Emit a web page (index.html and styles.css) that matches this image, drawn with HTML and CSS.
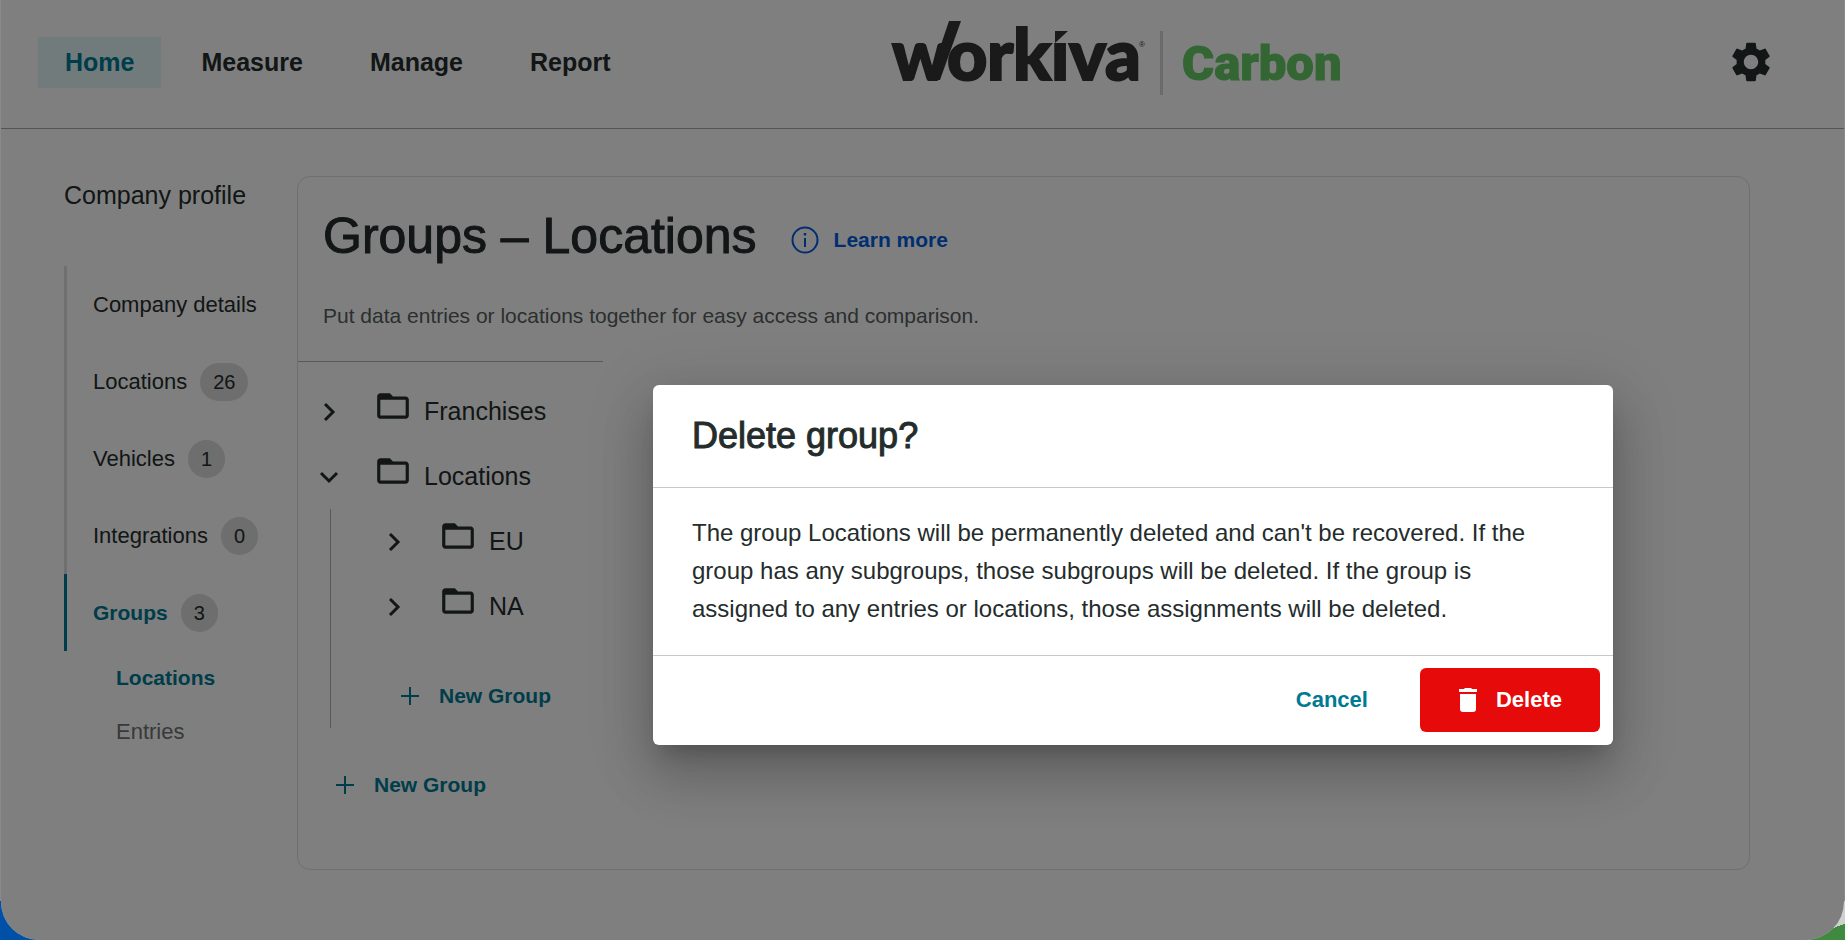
FILE: index.html
```html
<!DOCTYPE html>
<html lang="en">
<head>
<meta charset="utf-8">
<title>Groups – Locations</title>
<link rel="stylesheet" href="styles.css">
</head>
<body>
<svg class="sprite" aria-hidden="true">
  <symbol id="chevron-right" viewBox="0 0 24 24"><path d="M8 4l8 8-8 8" fill="none" stroke="currentColor" stroke-width="3"/></symbol>
  <symbol id="chevron-down" viewBox="0 0 24 24"><path d="M4 8l8 8 8-8" fill="none" stroke="currentColor" stroke-width="3"/></symbol>
  <symbol id="folder" viewBox="0 0 24 24"><path fill="currentColor" d="M20 6h-8l-2-2H4c-1.1 0-1.99.9-1.99 2L2 18c0 1.100.900 2 2 2h16c1.100 0 2-.9 2-2V8c0-1.100-.9-2-2-2zm0 12H4V8h16v10z"/></symbol>
  <symbol id="plus" viewBox="0 0 24 24"><path d="M12 3v18M3 12h18" fill="none" stroke="currentColor" stroke-width="2"/></symbol>
</svg>
<div class="window">
  <header class="topbar">
    <nav class="main-nav" aria-label="Main">
      <a class="main-link current" href="#">Home</a>
      <a class="main-link" href="#">Measure</a>
      <a class="main-link" href="#">Manage</a>
      <a class="main-link" href="#">Report</a>
    </nav>
    <svg class="logo" viewBox="0 4 450 84" role="img" aria-label="Workiva Carbon">
      <text class="logo-word" x="0 55 95 121 159 177 213" y="64">workiva</text>
      <path class="logo-mask" d="M161 8h18v19h-18z"/>
      <path class="logo-ink" d="M57 5h12L48 64H37z"/>
      <path class="logo-ink" d="M163 15h13l-13 12z"/>
      <text class="logo-mark" x="247" y="31">®</text>
      <path class="logo-rule" d="M268 15h3v64h-3z"/>
      <text class="logo-product" x="290" y="64">Carbon</text>
    </svg>
    <button class="icon-button" type="button" aria-label="Settings">
      <svg class="gear" viewBox="0 0 24 24"><path fill="currentColor" d="M19.140 12.940c.04-.3.06-.61.06-.94 0-.32-.02-.64-.07-.94l2.030-1.580c.18-.14.23-.41.12-.61l-1.920-3.320c-.12-.22-.37-.29-.59-.22l-2.390.96c-.5-.38-1.030-.7-1.620-.94l-.36-2.540c-.04-.24-.24-.41-.48-.41h-3.840c-.24 0-.43.17-.47.41l-.36 2.540c-.59.24-1.130.57-1.620.94l-2.390-.96c-.22-.08-.47 0-.59.22L2.740 8.870c-.12.21-.08.47.12.61l2.030 1.580c-.05.3-.09.63-.09.94s.02.64.07.94l-2.030 1.580c-.18.14-.23.41-.12.61l1.920 3.320c.12.22.37.29.59.22l2.390-.96c.5.38 1.030.7 1.620.94l.36 2.540c.05.24.24.41.48.41h3.840c.24 0 .44-.17.47-.41l.36-2.540c.59-.24 1.130-.56 1.620-.94l2.390.96c.22.08.47 0 .59-.22l1.920-3.320c.12-.22.07-.47-.12-.61l-2.010-1.580zM12 15.600c-1.980 0-3.600-1.620-3.600-3.600s1.620-3.600 3.600-3.600 3.600 1.620 3.600 3.600-1.620 3.600-3.600 3.600z"/></svg>
    </button>
  </header>

  <div class="layout">
    <aside class="sidebar">
      <h2 class="sidebar-title">Company profile</h2>
      <nav class="side-nav" aria-label="Company profile">
        <a class="side-link" href="#">Company details</a>
        <a class="side-link" href="#">Locations <span class="badge">26</span></a>
        <a class="side-link" href="#">Vehicles <span class="badge">1</span></a>
        <a class="side-link" href="#">Integrations <span class="badge">0</span></a>
        <a class="side-link current" href="#">Groups <span class="badge">3</span></a>
        <a class="sub-link current" href="#">Locations</a>
        <a class="sub-link" href="#">Entries</a>
      </nav>
    </aside>

    <main class="card">
      <div class="card-head">
        <div class="title-row">
          <h1 class="title">Groups – Locations</h1>
          <a class="learn-more" href="#">
            <svg class="info" viewBox="0 0 28 28"><circle cx="14" cy="14" r="12.500" fill="none" stroke="currentColor" stroke-width="2"/><path fill="currentColor" d="M13 12h2v9h-2zM12.800 7h2.400v2.600h-2.400z"/></svg>
            Learn more
          </a>
        </div>
        <p class="subtitle">Put data entries or locations together for easy access and comparison.</p>
      </div>
      <div class="tree">
        <ul class="tree-list">
          <li>
            <div class="tree-row"><button class="toggle" type="button" aria-label="Expand Franchises"><svg class="icon"><use href="#chevron-right"/></svg></button><svg class="folder"><use href="#folder"/></svg><span>Franchises</span></div>
          </li>
          <li>
            <div class="tree-row"><button class="toggle" type="button" aria-label="Collapse Locations"><svg class="icon"><use href="#chevron-down"/></svg></button><svg class="folder"><use href="#folder"/></svg><span>Locations</span></div>
            <ul class="tree-list children">
              <li class="tree-row"><button class="toggle" type="button" aria-label="Expand EU"><svg class="icon"><use href="#chevron-right"/></svg></button><svg class="folder"><use href="#folder"/></svg><span>EU</span></li>
              <li class="tree-row"><button class="toggle" type="button" aria-label="Expand NA"><svg class="icon"><use href="#chevron-right"/></svg></button><svg class="folder"><use href="#folder"/></svg><span>NA</span></li>
              <li class="new-item"><button class="new-group" type="button"><svg class="icon"><use href="#plus"/></svg>New Group</button></li>
            </ul>
          </li>
          <li class="new-item"><button class="new-group" type="button"><svg class="icon"><use href="#plus"/></svg>New Group</button></li>
        </ul>
      </div>
    </main>
  </div>

  <div class="backdrop">
    <section class="dialog" role="dialog" aria-modal="true" aria-labelledby="dialog-title">
      <h2 class="dialog-title" id="dialog-title">Delete group?</h2>
      <p class="dialog-body">The group Locations will be permanently deleted and can't be recovered. If the group has any subgroups, those subgroups will be deleted. If the group is assigned to any entries or locations, those assignments will be deleted.</p>
      <div class="dialog-actions">
        <button class="cancel" type="button">Cancel</button>
        <button class="delete" type="button">
          <svg class="trash" viewBox="0 0 24 28"><path fill="currentColor" d="M3 3h5l1-1h6l1 1h5v3H3zM4 8h16v15q0 3-3 3H7q-3 0-3-3z"/></svg>
          Delete
        </button>
      </div>
    </section>
  </div>
</div>
</body>
</html>
```
FILE: styles.css
```css
* { box-sizing: border-box; }

body {
  margin: 0;
  min-height: 100vh;
  display: flex;
  font-family: "Liberation Sans", Arial, sans-serif;
  font-size: 22px;
  color: #242c2c;
  background:
    linear-gradient(160deg, transparent 50%, #3f8a3f 50%) right bottom / 40px 20px no-repeat,
    linear-gradient(#0050a8, #0050a8) left bottom / 40px 40px no-repeat,
    linear-gradient(#d0d0d0, #d0d0d0) right bottom / 40px 40px no-repeat,
    #8a8a8a;
}

h1, h2, p, ul { margin: 0; padding: 0; font-weight: 400; }
ul { list-style: none; }
a { color: inherit; text-decoration: none; }
button { font: inherit; color: inherit; background: none; border: 0; padding: 0; cursor: pointer; }
svg { display: block; flex: none; }
.sprite { display: none; }

.window {
  position: relative;
  flex: 1;
  margin: 0 1px 1px;
  background: #fff;
  border-radius: 0 0 38px 38px;
  overflow: hidden;
}

.topbar {
  display: grid;
  grid-template-columns: 49% auto 1fr;
  column-gap: 3px;
  align-items: center;
  height: 129px;
  padding: 0 69px 4px 37px;
  border-bottom: 1px solid #a8a8a8;
}
.main-nav { display: flex; gap: 13px; }
.main-link {
  padding: 0 27px;
  line-height: 51px;
  font-size: 25px;
  font-weight: 700;
}
.main-link.current { color: #007a94; background: #e4f6f8; }
.logo { width: 450px; height: 84px; overflow: visible; }
.logo-word { font: 900 70px Lato, sans-serif; fill: #343434; stroke: #343434; stroke-width: 2px; }
.logo-ink { fill: #343434; }
.logo-mask { fill: #fff; }
.logo-mark { font: 8px "Liberation Sans", sans-serif; fill: #343434; }
.logo-rule { fill: #d6d6d6; }
.logo-product { font: 900 49px Roboto, sans-serif; fill: #66cc66; stroke: #66cc66; stroke-width: 1px; }
.icon-button { justify-self: end; }
.gear { width: 48px; height: 48px; }

.layout {
  display: grid;
  grid-template-columns: 233px 1fr;
  padding: 47px 94px 70px 63px;
}
.sidebar-title { font-size: 25px; line-height: 38px; }
.side-nav { display: flex; flex-direction: column; margin-top: 52px; }
.side-link {
  display: flex;
  align-items: center;
  gap: 13px;
  height: 77px;
  padding-left: 26px;
  border-left: 3px solid #dedede;
}
.side-link.current { color: #007a94; border-color: #007a94; font-size: 21px; font-weight: 700; }
.badge {
  padding: 0 13px;
  line-height: 38px;
  font-size: 20px;
  font-weight: 400;
  color: #242c2c;
  background: #dadcdb;
  border-radius: 19px;
}
.sub-link { padding-left: 52px; line-height: 54px; color: #707474; }
.sub-link.current { color: #007a94; font-size: 21px; font-weight: 700; }

.card {
  min-width: 0;
  padding: 29px 0 52px;
  border: 1px solid #dedede;
  border-radius: 13px;
}
.card-head { padding: 0 25px 31px; }
.title-row { display: flex; align-items: center; gap: 34px; }
.title { font-size: 50px; line-height: 60px; -webkit-text-stroke: 1px currentColor; }
.learn-more {
  display: flex;
  align-items: center;
  gap: 15px;
  padding-top: 8px;
  font-size: 21px;
  font-weight: 700;
  color: #005ce0;
}
.info { width: 28px; height: 28px; }
.subtitle { margin-top: 36px; font-size: 21px; line-height: 28px; color: #565e5e; }

.tree {
  width: 305px;
  padding: 17px 0 0 19px;
  border-top: 1px solid #b2b2b2;
}
.tree-row { display: flex; align-items: center; height: 65px; font-size: 25px; }
.icon { width: 24px; height: 24px; }
.folder { width: 38px; height: 38px; margin: 0 12px 12px 33px; }
.children { margin-left: 13px; padding-left: 51px; border-left: 1px solid #b2b2b2; }
.new-item { padding: 24px 0 0 16px; }
.new-group {
  display: flex;
  align-items: center;
  gap: 17px;
  height: 65px;
  font-size: 21px;
  font-weight: 700;
  white-space: nowrap;
  color: #007a94;
}

.backdrop {
  position: absolute;
  inset: 0;
  display: flex;
  align-items: center;
  justify-content: center;
  padding: 190px 0 0 421px;
  background: rgba(0, 0, 0, 0.5);
}
.dialog {
  width: 960px;
  background: #fff;
  border-radius: 6px;
  box-shadow:
    0 15px 20px -9px rgba(0, 0, 0, 0.2),
    0 32px 52px 4px rgba(0, 0, 0, 0.14),
    0 12px 62px 10px rgba(0, 0, 0, 0.12);
}
.dialog-title {
  padding: 0 39px;
  font-size: 36px;
  line-height: 102px;
  -webkit-text-stroke: 1px currentColor;
}
.dialog-body {
  padding: 26px 72px 27px 39px;
  font-size: 24px;
  line-height: 38px;
  border: solid #c8c8c8;
  border-width: 1px 0;
}
.dialog-actions {
  display: flex;
  align-items: center;
  justify-content: flex-end;
  gap: 52px;
  padding: 12px 13px 13px;
  font-size: 22px;
  font-weight: 700;
}
.cancel { color: #007a94; }
.delete {
  display: flex;
  align-items: center;
  gap: 16px;
  height: 64px;
  padding: 0 38px 0 36px;
  color: #fff;
  background: #e60a0a;
  border-radius: 6px;
}
.trash { width: 24px; height: 28px; }
```
